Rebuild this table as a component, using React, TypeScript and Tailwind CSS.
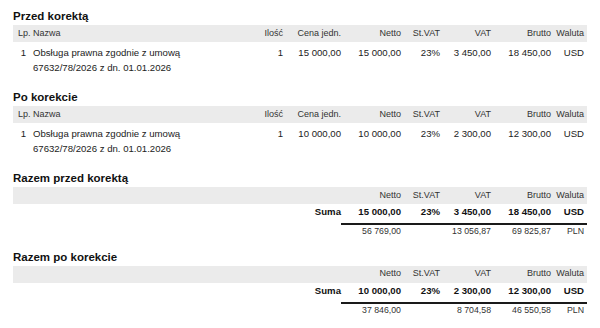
import React from "react";

type Row = {
  lp: number;
  name: string[];
  ilosc: string;
  cena: string;
  netto: string;
  stVat: string;
  vat: string;
  brutto: string;
  waluta: string;
};

type Totals = {
  netto: string;
  stVat: string;
  vat: string;
  brutto: string;
  waluta: string;
  pln: { netto: string; vat: string; brutto: string; waluta: string };
};

const przed: Row = {
  lp: 1,
  name: ["Obsługa prawna zgodnie z umową", "67632/78/2026 z dn. 01.01.2026"],
  ilosc: "1",
  cena: "15 000,00",
  netto: "15 000,00",
  stVat: "23%",
  vat: "3 450,00",
  brutto: "18 450,00",
  waluta: "USD",
};

const po: Row = {
  ...przed,
  cena: "10 000,00",
  netto: "10 000,00",
  vat: "2 300,00",
  brutto: "12 300,00",
};

const razemPrzed: Totals = {
  netto: "15 000,00",
  stVat: "23%",
  vat: "3 450,00",
  brutto: "18 450,00",
  waluta: "USD",
  pln: { netto: "56 769,00", vat: "13 056,87", brutto: "69 825,87", waluta: "PLN" },
};

const razemPo: Totals = {
  netto: "10 000,00",
  stVat: "23%",
  vat: "2 300,00",
  brutto: "12 300,00",
  waluta: "USD",
  pln: { netto: "37 846,00", vat: "8 704,58", brutto: "46 550,58", waluta: "PLN" },
};

// kolumny po prawej stronie (liczbowe)
const cell = "shrink-0 text-right pr-[3px]";

function Title({ children }: { children: React.ReactNode }) {
  return (
    <h2 className="h-[18px] leading-[18px] text-[11.5px] font-bold text-[#111]">{children}</h2>
  );
}

function ValueHeaders() {
  return (
    <>
      <div className={`${cell} w-[60px]`}>Netto</div>
      <div className={`${cell} w-[39px]`}>St.VAT</div>
      <div className={`${cell} w-[51px]`}>VAT</div>
      <div className={`${cell} w-[60px]`}>Brutto</div>
      <div className={`${cell} w-[33px]`}>Waluta</div>
    </>
  );
}

function ItemsTable({ title, row }: { title: string; row: Row }) {
  return (
    <section className="mb-[13px]">
      <Title>{title}</Title>
      <div className="flex h-[17px] items-center bg-[#ebebeb] text-[9px] text-[#333]">
        <div className="w-[18px] shrink-0 pl-[5px]">Lp.</div>
        <div className="flex-1 pl-[2px]">Nazwa</div>
        <div className={`${cell} w-[40px]`}>Ilość</div>
        <div className={`${cell} w-[58px]`}>Cena jedn.</div>
        <ValueHeaders />
      </div>
      <div className="flex pt-[3px] text-[9.6px] leading-[15px] text-[#222]">
        <div className="w-[18px] shrink-0 pr-[5px] text-right">{row.lp}</div>
        <div className="flex-1 pl-[2px]">
          {row.name.map((line) => (
            <div key={line}>{line}</div>
          ))}
        </div>
        <div className={`${cell} w-[40px]`}>{row.ilosc}</div>
        <div className={`${cell} w-[58px]`}>{row.cena}</div>
        <div className={`${cell} w-[60px]`}>{row.netto}</div>
        <div className={`${cell} w-[39px]`}>{row.stVat}</div>
        <div className={`${cell} w-[51px]`}>{row.vat}</div>
        <div className={`${cell} w-[60px]`}>{row.brutto}</div>
        <div className={`${cell} w-[33px]`}>{row.waluta}</div>
      </div>
    </section>
  );
}

function TotalsTable({ title, t, last }: { title: string; t: Totals; last?: boolean }) {
  return (
    <section className={last ? "" : "mb-[9.7px]"}>
      <Title>{title}</Title>
      <div className="flex h-[17px] items-center justify-end bg-[#ebebeb] text-[9px] text-[#333]">
        <ValueHeaders />
      </div>
      <div className="flex justify-end text-[9.6px] font-bold leading-[15px] text-[#111]">
        <div className={`${cell} w-[58px]`}>Suma</div>
        <div className={`${cell} w-[60px]`}>{t.netto}</div>
        <div className={`${cell} w-[39px]`}>{t.stVat}</div>
        <div className={`${cell} w-[51px]`}>{t.vat}</div>
        <div className={`${cell} w-[60px]`}>{t.brutto}</div>
        <div className={`${cell} w-[33px]`}>{t.waluta}</div>
      </div>
      <div className="mt-[4px] flex justify-end">
        <div className="flex w-[246px] justify-end border-t-2 border-[#1a1a1a] text-[8.75px] leading-[13px] text-[#333]">
          <div className={`${cell} w-[60px]`}>{t.pln.netto}</div>
          <div className={`${cell} w-[39px]`}></div>
          <div className={`${cell} w-[51px]`}>{t.pln.vat}</div>
          <div className={`${cell} w-[60px]`}>{t.pln.brutto}</div>
          <div className={`${cell} w-[33px]`}>{t.pln.waluta}</div>
        </div>
      </div>
    </section>
  );
}

export default function App() {
  return (
    <div
      className="h-[328px] w-[600px] overflow-hidden bg-white px-[13px] pt-[7px]"
      style={{ fontFamily: '"Liberation Sans", Arial, sans-serif' }}
    >
      <ItemsTable title="Przed korektą" row={przed} />
      <ItemsTable title="Po korekcie" row={po} />
      <TotalsTable title="Razem przed korektą" t={razemPrzed} />
      <TotalsTable title="Razem po korekcie" t={razemPo} last />
    </div>
  );
}
